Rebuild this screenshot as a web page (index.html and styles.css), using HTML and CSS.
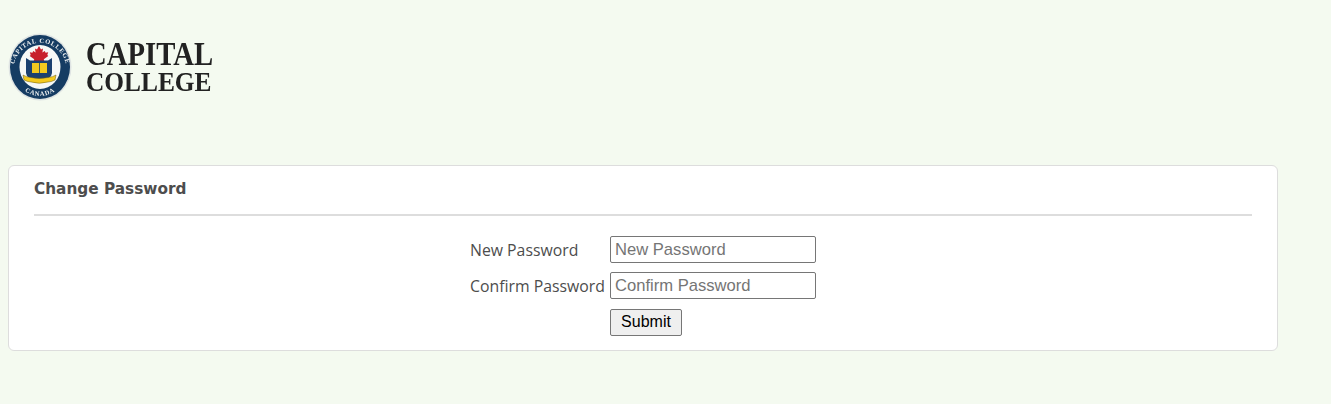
FILE: index.html
```html
<!DOCTYPE html>
<html lang="en">
<head>
    <meta charset="UTF-8">
    <meta name="viewport" content="width=device-width, initial-scale=1.0">
    <title>Change Password</title>
    <link rel="stylesheet" href="styles.css">
</head>
<body>
    <div class="logo">
      <svg class="seal" width="64" height="68" viewBox="0 0 64 68">
        <defs>
          <path id="topArc" d="M6 42 A26.500 27 0 1 1 58 42"></path>
          <path id="bottomArc" d="M9 50 A27.500 28.500 0 0 0 55 50"></path>
        </defs>
        <ellipse cx="32" cy="34" rx="31.500" ry="33.500" fill="#dfe4e3"></ellipse>
        <ellipse cx="32" cy="34" rx="30" ry="32" fill="#153c63"></ellipse>
        <ellipse cx="32" cy="34" rx="20.500" ry="22" fill="#f6f8f6"></ellipse>
        <text class="seal-text"><textPath href="#topArc" startOffset="50%" text-anchor="middle">CAPITAL COLLEGE</textPath></text>
        <text class="seal-text"><textPath href="#bottomArc" startOffset="50%" text-anchor="middle">CANADA</textPath></text>
        <path d="M31 13 l2 3.500 2-1 -.6 4 2.400-1.600 .8 1.800 2.600-.4 -.9 2.800 1 .8 -4.500 3.400 .4 1.700 h-4.700 v2 h-1 v-2 h-4.700 l.4-1.700 -4.500-3.400 1-.8 -.9-2.800 2.600 .4 .8-1.800 2.400 1.600 -.6-4 2 1z" fill="#c8202c"></path>
        <path d="M18 25 l4 2.500 h18 l4-2.500 v15 q0 5-13 10 q-13-5-13-10z" fill="#1b4070"></path>
        <rect x="24" y="30" width="15" height="10" fill="#f3c91f"></rect>
        <path d="M31.500 30 v10" stroke="#1b4070" stroke-width=".8"></path>
        <path d="M15 42 q3 2 8 2.500 q8 2 17 0 q5-.5 8-2.500 l-1 5 q-4 2-7 2 q-9 2.500-17 0 q-3 0-7-2z" fill="#f3c91f" stroke="#6b5a10" stroke-width=".5"></path>
      </svg>
      <div class="logo-name">
        <span class="logo-top">CAPITAL</span>
        <span class="logo-bottom">COLLEGE</span>
      </div>
    </div>

    <div class="card">
      <div class="card-title">Change Password</div>
      <form class="pass-form">
        <label for="newPass">New Password</label>
        <input type="password" id="newPass" placeholder="New Password">
        <label for="confirmPass">Confirm Password</label>
        <input type="password" id="confirmPass" placeholder="Confirm Password">
        <button type="button" class="submit-btn">Submit</button>
      </form>
    </div>
</body>
</html>
```

FILE: styles.css
```css
body {
    background-color: #F4FAF0;
    font-family: 'Open Sans', sans-serif;
    color: #4d4d4d;
    margin: 0;
    padding: 33px 8px 0;
}

.logo {
    display: flex;
    align-items: center;
    height: 68px;
    filter: blur(.3px);
}

.seal {
    display: block;
}

.seal-text {
    font-family: 'Liberation Serif', serif;
    font-size: 6.500px;
    font-weight: bold;
    letter-spacing: .7px;
    fill: #f2f4f4;
}

.logo-name {
    margin-left: 14px;
    font-family: 'Liberation Serif', serif;
    font-weight: bold;
    color: #222;
}

.logo-top,
.logo-bottom {
    display: block;
    transform-origin: left center;
}

.logo-top {
    font-size: 33px;
    line-height: 29px;
    transform: scaleX(.87);
}

.logo-bottom {
    font-size: 27px;
    line-height: 26px;
    transform: scaleX(.94);
}

.card {
    width: 1270px;
    height: 186px;
    box-sizing: border-box;
    margin-top: 64px;
    padding: 0 25px;
    background-color: #fff;
    border: 1px solid #ddd;
    border-radius: 6px;
}

.card-title {
    height: 50px;
    box-sizing: border-box;
    padding-top: 12px;
    font-family: 'DejaVu Sans', sans-serif;
    font-size: 15.300px;
    line-height: 22px;
    font-weight: bold;
    border-bottom: 2px solid #ddd;
}

.pass-form {
    display: grid;
    grid-template-columns: 140px 206px;
    row-gap: 9.400px;
    width: 346px;
    margin: 20px auto 0;
    align-items: center;
}

.pass-form label {
    font-size: 15.800px;
    line-height: 22px;
    padding-top: 1px;
}

.pass-form input {
    height: 27px;
    box-sizing: border-box;
    padding: 0 4px;
    font-family: 'Liberation Sans', sans-serif;
    font-size: 16.600px;
    border: 1px solid #767676;
    border-radius: 2px;
}

.submit-btn {
    grid-column: 2;
    justify-self: start;
    width: 72px;
    height: 27px;
    padding: 0;
    font-family: 'Liberation Sans', sans-serif;
    font-size: 16px;
    color: #000;
    background-color: #efefef;
    border: 1px solid #767676;
    border-radius: 2px;
}
```
